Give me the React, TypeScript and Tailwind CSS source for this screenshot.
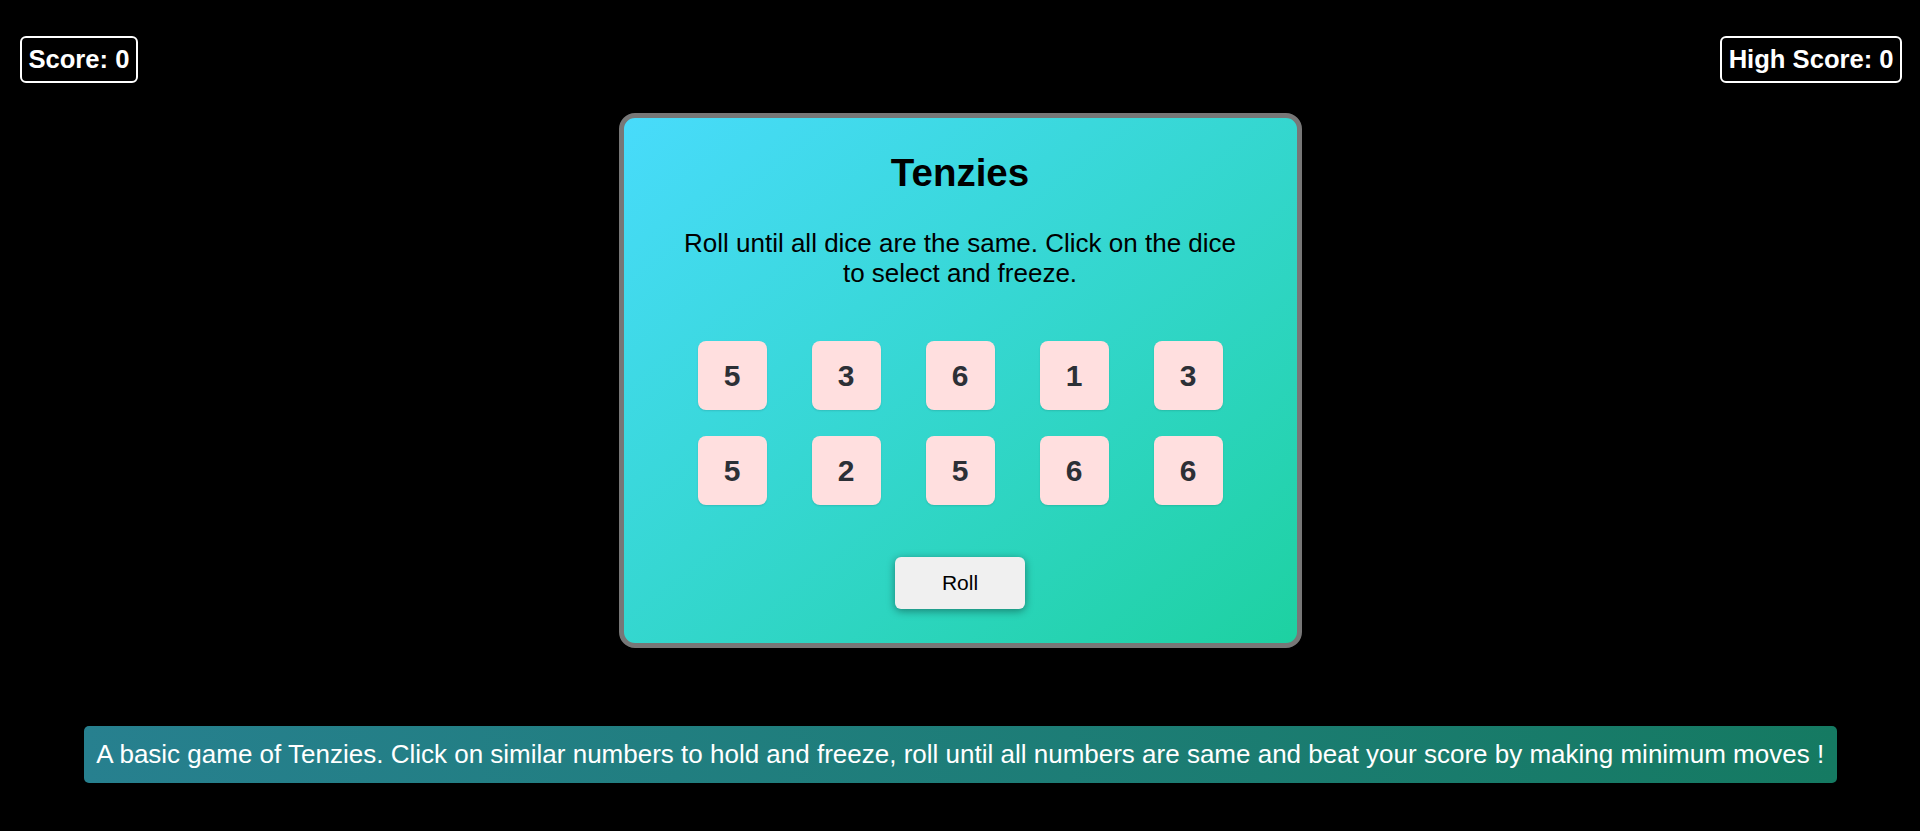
import React from "react";

const dice = [5, 3, 6, 1, 3, 5, 2, 5, 6, 6];

export default function App() {
  return (
    <div
      className="min-h-[831px] w-full bg-black flex flex-col"
      style={{ fontFamily: '"Liberation Sans", Arial, sans-serif' }}
    >
      <div className="flex justify-between items-start pt-[36px] pl-[20px] pr-[18px]">
        <div className="h-[47px] flex items-center border-2 border-white rounded-[6px] px-[6.4px] text-white font-bold text-[25.6px] leading-[1.15]">
          Score: 0
        </div>
        <div className="h-[47px] flex items-center border-2 border-white rounded-[6px] px-[6.4px] text-white font-bold text-[25.6px] leading-[1.15]">
          High Score: 0
        </div>
      </div>

      <div className="flex justify-center mt-[30px]">
        <div className="w-[683px] h-[535px] border-[5px] border-[#777777] rounded-[16px] bg-gradient-to-br from-[#48dbfb] to-[#1dd1a1] flex flex-col items-center pt-[33px]">
          <h1 className="text-[38.5px] font-bold leading-[1.15] text-black">Tenzies</h1>
          <p className="mt-[34px] w-[575px] text-center text-[26px] leading-[1.15] text-black">
            Roll until all dice are the same. Click on the dice to select and freeze.
          </p>
          <div className="mt-[52px] grid grid-cols-5 gap-x-[45px] gap-y-[26px]">
            {dice.map((d, i) => (
              <div
                key={i}
                className="w-[69px] h-[69px] rounded-[8px] bg-[#ffdfdf] flex items-center justify-center text-[30px] font-bold text-[#2c3036] shadow-[0_1px_2px_rgba(0,0,0,0.12)]"
              >
                {d}
              </div>
            ))}
          </div>
          <button className="mt-[52px] w-[130px] h-[52px] rounded-[6px] bg-[#f0f0f0] text-[21px] text-black shadow-[0_2px_8px_rgba(0,0,0,0.4)]">
            Roll
          </button>
        </div>
      </div>

      <div className="flex justify-center mt-[78px]">
        <div className="w-[1753px] h-[57px] flex items-center rounded-[5px] bg-gradient-to-r from-[#27808f] to-[#157a62] pl-[12.8px] pr-[4px] text-white text-[26px] leading-[1.15] whitespace-nowrap overflow-hidden">
          A basic game of Tenzies. Click on similar numbers to hold and freeze, roll until all numbers are same and beat your score by making minimum moves !
        </div>
      </div>
    </div>
  );
}
